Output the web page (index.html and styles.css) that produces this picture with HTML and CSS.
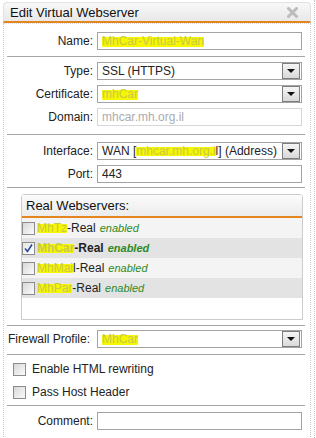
FILE: index.html
```html
<!DOCTYPE html>
<html lang="en">
<head>
  <meta charset="UTF-8" />
  <title>Edit Virtual Webserver</title>
  <link rel="stylesheet" href="styles.css">
</head>
<body>
  <div class="page">
    <div class="dialog">
      <div class="titlebar">
        <span class="title">Edit Virtual Webserver</span>
        <svg class="close" width="11" height="11" viewBox="0 0 11 11"><path d="M1.5 1.5 L9.5 9.5 M9.5 1.5 L1.5 9.5" stroke="#bcbcbc" stroke-width="3" stroke-linecap="round"/></svg>
      </div>

      <div class="body">
        <div class="group g-name">
          <div class="row">
            <label>Name:</label>
            <div class="field"><span class="mark">MhCar-Virtual-Wan</span></div>
          </div>
        </div>
        <div class="sep"></div>

        <div class="group g-type">
          <div class="row">
            <label>Type:</label>
            <div class="field select"><span>SSL (HTTPS)</span><i class="arrow"></i></div>
          </div>
          <div class="row">
            <label>Certificate:</label>
            <div class="field select"><span class="mark">mhCar</span><i class="arrow"></i></div>
          </div>
          <div class="row">
            <label>Domain:</label>
            <div class="field disabled">mhcar.mh.org.il</div>
          </div>
        </div>
        <div class="sep"></div>

        <div class="group g-iface">
          <div class="row">
            <label>Interface:</label>
            <div class="field select"><span>WAN [<span class="mark">mhcar.mh.org.i</span>l] (Address)</span><i class="arrow"></i></div>
          </div>
          <div class="row">
            <label>Port:</label>
            <div class="field">443</div>
          </div>
        </div>
        <div class="sep"></div>

        <div class="group g-real">
          <div class="realbox">
            <div class="realhead">Real Webservers:</div>
            <div class="realrow"><i class="check"></i><span class="mark">MhTz</span>-Real <em>enabled</em></div>
            <div class="realrow alt on"><i class="check checked"><svg width="11" height="11" viewBox="0 0 11 11"><path d="M2 5.5 L4.5 8.5 L9 1.5" fill="none" stroke="#2b4a9a" stroke-width="1.6"/></svg></i><span class="mark">MhCar</span>-Real <em>enabled</em></div>
            <div class="realrow"><i class="check"></i><span class="mark">MhMai</span>l-Real <em>enabled</em></div>
            <div class="realrow alt"><i class="check"></i><span class="mark">MhPar</span>-Real <em>enabled</em></div>
          </div>
        </div>
        <div class="sep"></div>

        <div class="group g-fw">
          <div class="row wide">
            <label>Firewall Profile:</label>
            <div class="field select"><span class="mark">MhCar</span><i class="arrow"></i></div>
          </div>
        </div>
        <div class="sep"></div>

        <div class="group g-opts">
          <div class="opt"><i class="check"></i>Enable HTML rewriting</div>
          <div class="opt"><i class="check"></i>Pass Host Header</div>
        </div>
        <div class="sep"></div>

        <div class="group g-comment">
          <div class="row">
            <label>Comment:</label>
            <div class="field"></div>
          </div>
        </div>
      </div>
    </div>
  </div>
</body>
</html>
```

FILE: styles.css
```css
body { margin: 0; padding: 0; background: #fff; font-family: "Liberation Sans", Arial, sans-serif; font-size: 12px; color: #222; }
.page { width: 314px; height: 438px; border-right: 1px dotted #c4c4c4; overflow: hidden; }
.dialog { margin: 2px 0 0 3px; width: 308px; }

.titlebar { height: 21px; display: flex; align-items: center; justify-content: space-between; padding: 0 12px 0 6px; border: 1px solid #e2e2e2; border-bottom: 2px solid #e3861f; border-radius: 4px 4px 0 0; background: linear-gradient(#f8f8f8, #e8e8e8); box-sizing: border-box; }
.title { font-size: 13px; color: #111; }

.body { border: 1px dotted #c8c8c8; border-top: 1px dotted #d8d8d8; height: 420px; box-sizing: border-box; }

.group { padding: 5px 0 6px; }
.g-name { padding: 8px 0 6px; }
.g-type { padding: 5px 0 8px; }
.g-iface { padding: 7px 0 4px; }
.g-real { padding: 6px 0 5px; }
.g-fw { padding: 4px 0 6px; }
.g-opts { padding: 5px 0 4px; }
.g-comment { padding: 6px 0; }

.sep { height: 1px; background: #a6a6a6; margin: 0 5px 0 3px; }

.row { display: grid; grid-template-columns: 89px 205px; column-gap: 4px; align-items: center; }
.row + .row { margin-top: 5px; }
.row label { text-align: right; color: #222; }
.row.wide label { text-align: left; padding-left: 4px; white-space: nowrap; }

.field { height: 18px; border: 1px solid #a3a3a3; box-sizing: border-box; background: #fff; padding: 0 4px; line-height: 16px; display: flex; align-items: center; white-space: nowrap; overflow: hidden; }
.field.disabled { border-color: #d6d6d6; color: #acacac; }
.field.select { justify-content: space-between; padding-right: 1px; }
.arrow { width: 16px; height: 14px; border: 1px solid #7e7e7e; background: linear-gradient(#f5f5f5, #d9d9d9); position: relative; flex: none; }
.arrow::after { content: ""; position: absolute; left: 4px; top: 5px; border-left: 4px solid transparent; border-right: 4px solid transparent; border-top: 4px solid #111; }

.mark { background: linear-gradient(transparent 22%, #f6f600 22%, #f6f600 86%, transparent 86%); color: #c9c94a; border-radius: 4px; }

.realbox { margin-left: 17px; width: 282px; height: 126px; border: 1px solid #cbcbcb; border-radius: 3px 3px 0 0; box-sizing: border-box; background: #fff; }
.realhead { height: 21px; padding-left: 4px; font-size: 13px; line-height: 21px; color: #111; background: linear-gradient(#fbfbfb, #ececec); border-bottom: 2px solid #e3861f; }
.realrow { height: 20px; display: flex; align-items: center; background: #f4f4f4; white-space: nowrap; }
.realrow.alt { background: #e3e3e3; }
.realrow.on { font-weight: bold; }
.realrow .check { margin: 0 2px 0 0; }
.realrow em { font-size: 11px; color: #2d8a1f; margin-left: 4px; }

.check { display: inline-flex; align-items: center; justify-content: center; width: 13px; height: 13px; box-sizing: border-box; border: 1px solid #8c8c8c; background: linear-gradient(135deg, #d8d8d8, #fbfbfb); flex: none; }
.check.checked { background: linear-gradient(135deg, #e6e6e6, #fff); }

.opt { height: 18px; display: flex; align-items: center; padding-left: 9px; font-size: 12px; }
.opt + .opt { margin-top: 5px; }
.opt .check { margin-right: 6px; }
```
